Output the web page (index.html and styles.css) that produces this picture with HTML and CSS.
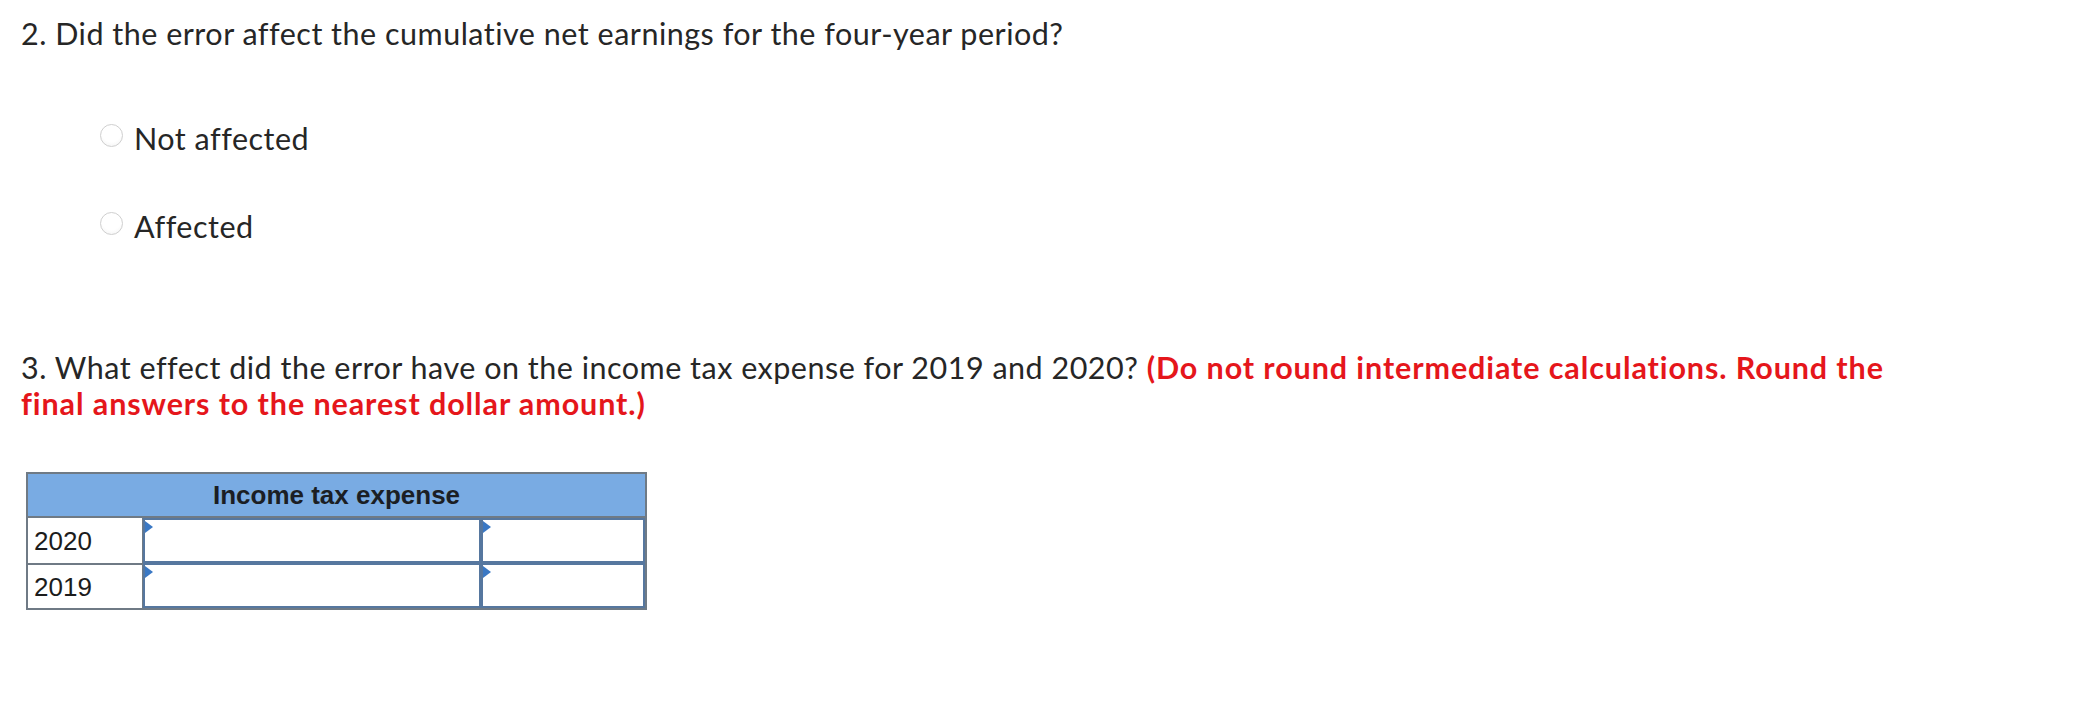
FILE: index.html
```html
<!DOCTYPE html>
<html lang="en">
<head>
<meta charset="utf-8">
<title>Question</title>
<link rel="stylesheet" href="styles.css">
</head>
<body>
<div class="page">
  <p class="q q2">2. Did the error affect the cumulative net earnings for the four-year period?</p>
  <div class="options">
    <label class="option"><span class="radio"></span><span class="opt-text">Not affected</span></label>
    <label class="option"><span class="radio"></span><span class="opt-text">Affected</span></label>
  </div>
  <p class="q q3">3. What effect did the error have on the income tax expense for 2019 and 2020? <span class="note">(Do not round intermediate calculations. Round the final answers to the nearest dollar amount.)</span></p>
  <div class="tbl">
    <div class="th">Income tax expense</div>
    <div class="lbl">2020</div>
    <div class="inp"><span class="tri"></span></div>
    <div class="inp"><span class="tri"></span></div>
    <div class="lbl">2019</div>
    <div class="inp"><span class="tri"></span></div>
    <div class="inp"><span class="tri"></span></div>
  </div>
</div>
</body>
</html>
```

FILE: styles.css
```css
* { box-sizing: border-box; }
html, body { margin: 0; padding: 0; background: #ffffff; }
.page {
  padding: 15px 0 0 21px;
  font-family: Lato, "Open Sans", sans-serif;
  font-size: 30.5px;
  letter-spacing: 0.5px;
  line-height: 36px;
  color: #262626;
  font-variant-ligatures: none;
  font-feature-settings: "liga" 0;
}
.q { margin: 0; }
.options {
  margin: 69px 0 0 79px;
  display: flex;
  flex-direction: column;
  gap: 52px;
}
.option {
  display: flex;
  align-items: flex-start;
  gap: 11px;
}
.radio {
  width: 23px;
  height: 23px;
  margin-top: 4px;
  border-radius: 50%;
  border: 1px solid #cfcfcf;
  background: radial-gradient(circle at 50% 35%, #ffffff 55%, #f0f0f0 100%);
  flex: none;
}
.q3 {
  margin-top: 105px;
  line-height: 36px;
  width: 1900px;
}
.note { color: #e5161b; font-weight: 700; letter-spacing: 0.9px; }
.tbl {
  margin: 51px 0 0 5px;
  display: grid;
  grid-template-columns: 115px 338px 164px;
  grid-template-rows: 44px 45px 45px;
  width: 621px;
  border: 2px solid #6f7a85;
  font-family: "Liberation Sans", Arial, sans-serif;
  letter-spacing: 0;
}
.th {
  grid-column: 1 / 4;
  background: #79abe3;
  border-bottom: 2px solid #6f7a85;
  font-weight: 700;
  font-size: 26px;
  line-height: 42px;
  text-align: center;
  color: #1b1e24;
}
.lbl {
  font-size: 26px;
  color: #1c1c1c;
  padding-left: 6px;
  display: flex;
  align-items: center;
  border-right: 1px solid #6f7a85;
}
.lbl + .inp + .inp + .lbl { border-top: 2px solid #6f7a85; }
.inp {
  position: relative;
  border: 2.5px solid #56779f;
  background: #fff;
}
.tri {
  position: absolute;
  left: 0;
  top: 1px;
  width: 0;
  height: 0;
  border-top: 6.5px solid transparent;
  border-bottom: 6.5px solid transparent;
  border-left: 8px solid #3a78c4;
}
```
